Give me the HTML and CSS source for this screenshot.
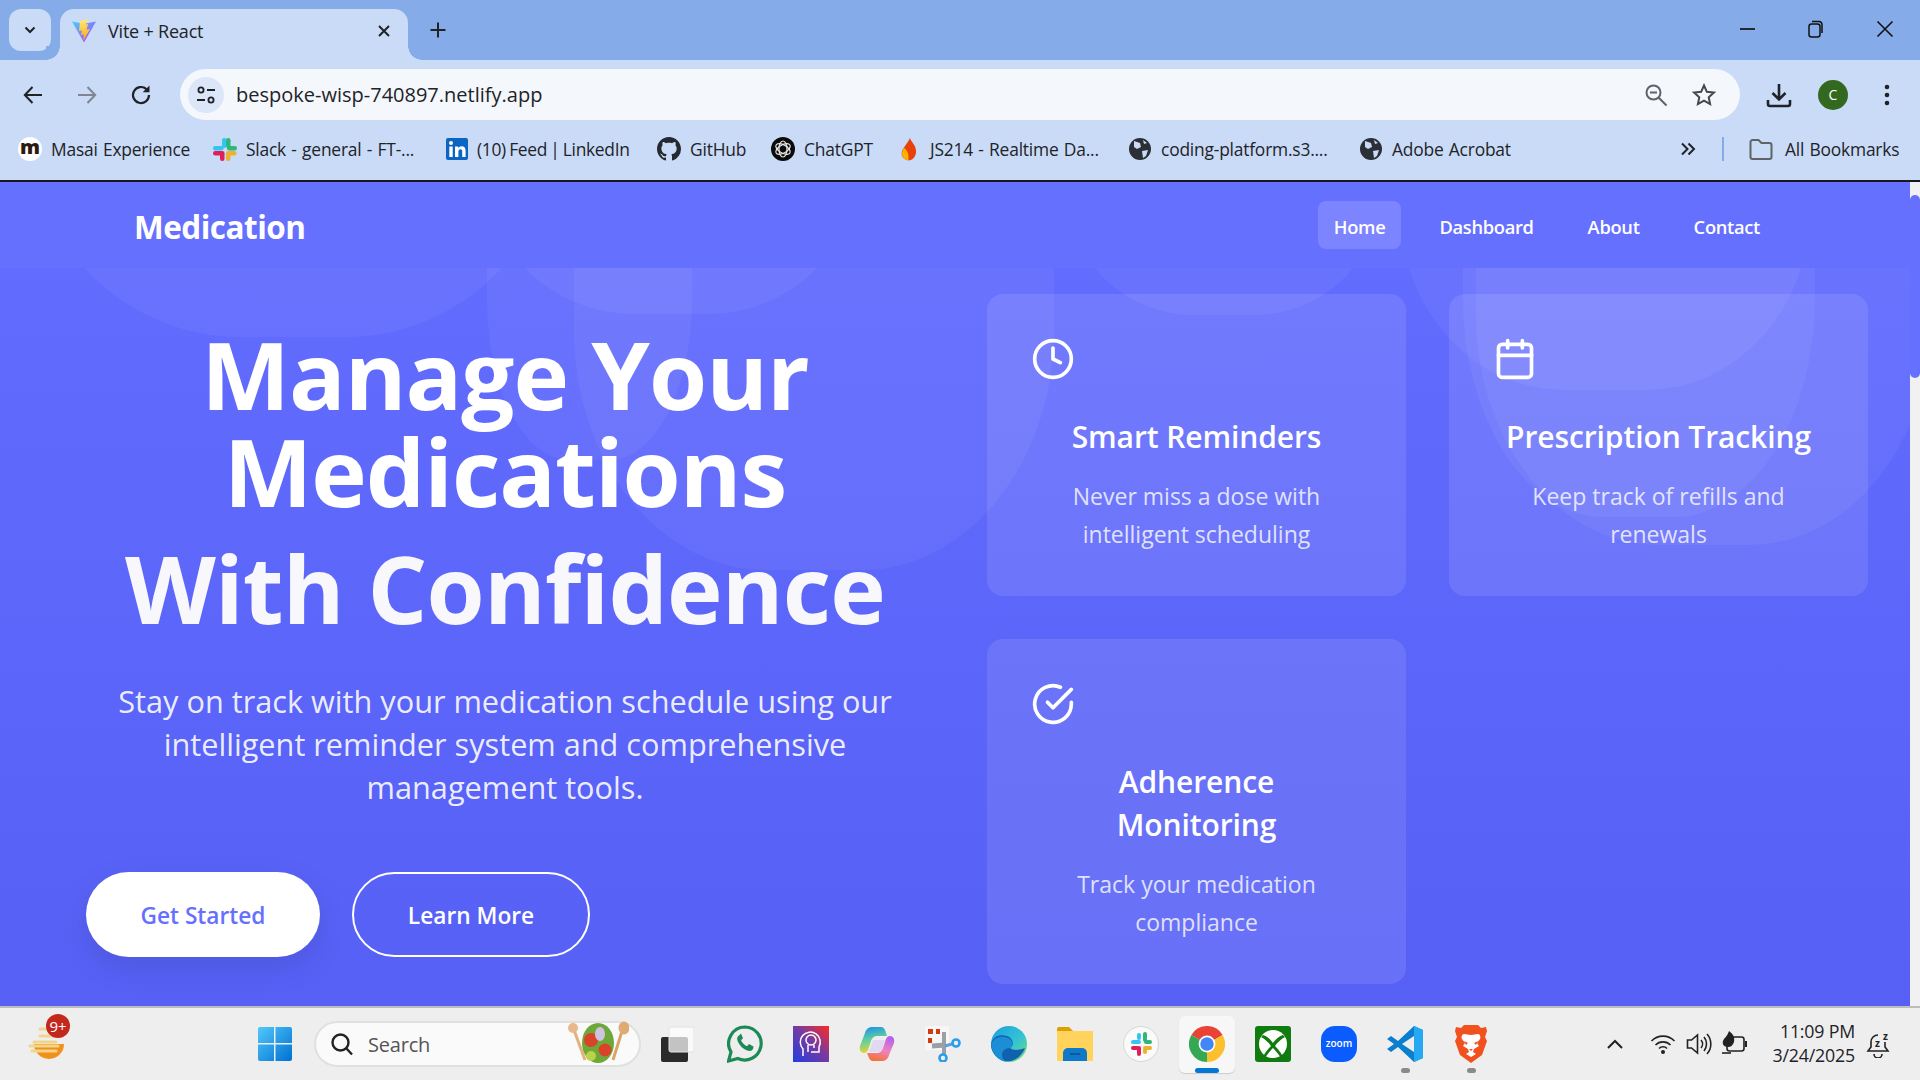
FILE: index.html
```html
<!DOCTYPE html>
<html lang="en">
<head>
    <meta charset="UTF-8">
    <meta name="viewport" content="width=device-width, initial-scale=1.0">
    <title>Vite + React</title>
    <link rel="stylesheet" href="styles.css">
</head>
<body>
    <div class="tabstrip">
        <div class="tab-list"><svg width="16" height="16" viewBox="0 0 16 16"><path d="M3.5 5.5 8 10l4.500-4.500" fill="none" stroke="#1f2328" stroke-width="2"/></svg></div>
        <div class="tab">
            <svg class="favicon" width="24" height="24" viewBox="0 0 24 24">
                <defs>
                    <linearGradient id="viteA" x1="0" y1="0" x2="1" y2="1"><stop offset="0" stop-color="#41d1ff"/><stop offset="1" stop-color="#bd34fe"/></linearGradient>
                    <linearGradient id="viteB" x1="0" y1="0" x2="0" y2="1"><stop offset="0" stop-color="#ffea83"/><stop offset="1" stop-color="#ffa800"/></linearGradient>
                </defs>
                <path d="M0 2.500 12 23.500 24 2.500 12 4.800z" fill="url(#viteA)"/>
                <path d="M17 0 8 2 7 12l3-.5-1 4.500 3-.5-1 6.500 7-12-3.500.7L16 5l-2.500.5z" fill="url(#viteB)"/>
            </svg>
            <span class="tab-title">Vite + React</span>
            <svg class="tab-close" width="14" height="14" viewBox="0 0 14 14"><path d="M2 2l10 10M12 2 2 12" stroke="#1f2328" stroke-width="2"/></svg>
        </div>
        <svg class="new-tab" width="18" height="18" viewBox="0 0 18 18"><path d="M9 1.500v15M1.500 9h15" stroke="#1f2328" stroke-width="2"/></svg>
        <div class="win-controls">
            <svg width="16" height="16" viewBox="0 0 16 16"><path d="M0 8h15" stroke="#111" stroke-width="1.700"/></svg>
            <svg width="16" height="18" viewBox="0 0 16 18"><rect x="1" y="4" width="11" height="13" rx="2.500" fill="none" stroke="#111" stroke-width="1.500"/><path d="M4 1.500h7a3 3 0 0 1 3 3V13" fill="none" stroke="#111" stroke-width="1.500"/></svg>
            <svg width="18" height="18" viewBox="0 0 18 18"><path d="M1.500 1.500l15 15M16.500 1.500l-15 15" stroke="#111" stroke-width="1.600"/></svg>
        </div>
    </div>

    <div class="toolbar">
        <svg class="nav-btn" width="24" height="24" viewBox="0 0 24 24"><path d="M21 12H4M11.500 4 3.800 12l7.700 8" fill="none" stroke="#1f2328" stroke-width="2"/></svg>
        <svg class="nav-btn" width="24" height="24" viewBox="0 0 24 24"><path d="M3 12h17M12.500 4l7.700 8-7.700 8" fill="none" stroke="#80858f" stroke-width="2"/></svg>
        <svg class="nav-btn" width="24" height="24" viewBox="0 0 24 24"><path d="M20 12a8 8 0 1 1-2.600-5.900" fill="none" stroke="#1f2328" stroke-width="2.200"/><path d="M20.500 2.500v6.800h-6.800z" fill="#1f2328"/></svg>
        <div class="omnibox">
            <span class="site-info"><svg width="22" height="22" viewBox="0 0 22 22"><circle cx="6" cy="6" r="2.600" fill="none" stroke="#1f2328" stroke-width="1.800"/><path d="M12 6h8M2 16h8" stroke="#1f2328" stroke-width="1.800"/><circle cx="16" cy="16" r="2.600" fill="none" stroke="#1f2328" stroke-width="1.800"/></svg></span>
            <span class="url">bespoke-wisp-740897.netlify.app</span>
            <svg class="omni-zoom" width="24" height="24" viewBox="0 0 24 24"><circle cx="9.500" cy="9.500" r="7" fill="none" stroke="#5f6368" stroke-width="2"/><path d="M6 9.500h7M14.500 14.500l8 8" stroke="#5f6368" stroke-width="2"/></svg>
            <svg class="omni-star" width="24" height="24" viewBox="0 0 24 24"><path d="M12 2.500l2.900 6.300 6.900.8-5.100 4.700 1.400 6.800-6.100-3.400-6.100 3.400 1.400-6.800-5.100-4.700 6.900-.8z" fill="none" stroke="#45484d" stroke-width="2"/></svg>
        </div>
        <svg class="tool-download" width="26" height="26" viewBox="0 0 26 26"><path d="M13 2v15M6.500 11l6.500 6.500 6.500-6.500" fill="none" stroke="#1f2328" stroke-width="2.600"/><path d="M2 18v4a2 2 0 0 0 2 2h18a2 2 0 0 0 2-2v-4" fill="none" stroke="#1f2328" stroke-width="2.600"/></svg>
        <span class="avatar">C</span>
        <svg class="tool-menu" width="6" height="24" viewBox="0 0 6 24"><circle cx="3" cy="4" r="2.300" fill="#1f2328"/><circle cx="3" cy="12" r="2.300" fill="#1f2328"/><circle cx="3" cy="20" r="2.300" fill="#1f2328"/></svg>
    </div>

    <div class="bookmarks">
        <div class="bm"><span class="bm-m">m</span>Masai Experience</div>
        <div class="bm"><svg width="24" height="24" viewBox="0 0 24 24"><rect x="9" y="1" width="4.500" height="10" rx="2.200" fill="#36c5f0"/><rect x="0" y="9" width="10.500" height="4.500" rx="2.200" fill="#36c5f0"/><rect x="13" y="1" width="4.500" height="10" rx="2.200" fill="#2eb67d"/><rect x="14" y="9" width="10" height="4.500" rx="2.200" fill="#2eb67d"/><rect x="0" y="14" width="10" height="4.500" rx="2.200" fill="#e01e5a"/><rect x="7" y="14" width="4.500" height="10" rx="2.200" fill="#e01e5a"/><rect x="13" y="14" width="10.500" height="4.500" rx="2.200" fill="#ecb22e"/><rect x="13" y="16" width="4.500" height="8" rx="2.200" fill="#ecb22e"/></svg>Slack - general - FT-...</div>
        <div class="bm bm-feed"><svg width="22" height="24" viewBox="0 0 22 24"><rect x="0" y="1" width="22" height="22" rx="2" fill="#0a66c2"/><circle cx="5" cy="6" r="2" fill="#fff"/><path d="M3.300 9.500h3.400V20H3.300zM9 9.500h3.200V11c.8-1.100 2-1.800 3.500-1.800 2.800 0 3.900 1.800 3.900 4.700V20h-3.400v-5.500c0-1.500-.5-2.300-1.700-2.300-1.300 0-2.100.9-2.100 2.500V20H9z" fill="#fff"/></svg>(10) Feed | LinkedIn</div>
        <div class="bm"><svg width="24" height="24" viewBox="0 0 16 16"><path fill="#24292f" d="M8 0C3.580 0 0 3.580 0 8c0 3.540 2.290 6.530 5.470 7.590.4.070.55-.17.55-.38 0-.19-.01-.82-.01-1.490-2.010.37-2.530-.49-2.690-.94-.09-.23-.48-.94-.82-1.130-.28-.15-.68-.52-.01-.53.63-.01 1.080.58 1.230.82.720 1.210 1.870.87 2.330.66.070-.52.28-.87.510-1.070-1.780-.2-3.640-.89-3.640-3.950 0-.87.310-1.590.820-2.150-.08-.2-.36-1.020.08-2.120 0 0 .67-.21 2.200.82.640-.18 1.320-.27 2-.27s1.360.09 2 .27c1.530-1.040 2.200-.82 2.200-.82.440 1.100.16 1.920.08 2.120.51.560.82 1.270.82 2.150 0 3.070-1.870 3.750-3.650 3.950.29.250.54.730.54 1.480 0 1.070-.01 1.930-.01 2.200 0 .21.150.46.550.38A8.010 8.010 0 0 0 16 8c0-4.420-3.580-8-8-8z"/></svg>GitHub</div>
        <div class="bm"><svg width="24" height="24" viewBox="0 0 24 24"><circle cx="12" cy="12" r="12" fill="#0b0b0b"/><g fill="none" stroke="#e8e8e8" stroke-width="1.200"><ellipse cx="12" cy="12" rx="8" ry="4" transform="rotate(30 12 12)"/><ellipse cx="12" cy="12" rx="8" ry="4" transform="rotate(90 12 12)"/><ellipse cx="12" cy="12" rx="8" ry="4" transform="rotate(150 12 12)"/></g></svg>ChatGPT</div>
        <div class="bm"><svg width="24" height="24" viewBox="0 0 24 24"><path d="M13 1c1 4 6 7 6 13a7.500 8.500 0 0 1-14 5C3 13 10 8 13 1z" fill="#e8410a"/><path d="M7 11c3 2 5 5 4.500 12A6 6 0 0 1 5 17c0-2 1-4 2-6z" fill="#ffb300"/></svg>JS214 - Realtime Da...</div>
        <div class="bm"><svg width="24" height="24" viewBox="0 0 24 24"><circle cx="12" cy="12" r="11" fill="#2b2f36"/><path d="M6 4l6 2 1 4-4 2-3-2zM14 14l6-1-2 6-3 2zM15 3l4 3-3 1z" fill="#c9dbf6"/></svg>coding-platform.s3....</div>
        <div class="bm"><svg width="24" height="24" viewBox="0 0 24 24"><circle cx="12" cy="12" r="11" fill="#2b2f36"/><path d="M6 4l6 2 1 4-4 2-3-2zM14 14l6-1-2 6-3 2zM15 3l4 3-3 1z" fill="#c9dbf6"/></svg>Adobe Acrobat</div>
        <svg class="bm-more" width="16" height="16" viewBox="0 0 16 16"><path d="M2 2.500 7.500 8 2 13.500M8.500 2.500 14 8l-5.500 5.500" fill="none" stroke="#1f2328" stroke-width="2"/></svg>
        <span class="bm-sep"></span>
        <div class="bm"><svg width="24" height="24" viewBox="0 0 24 24"><path d="M1.500 5a2 2 0 0 1 2-2h6l3 3h8a2 2 0 0 1 2 2v12a2 2 0 0 1-2 2h-17a2 2 0 0 1-2-2z" fill="none" stroke="#5f6368" stroke-width="2"/></svg>All Bookmarks</div>
    </div>

    <div class="page">
        <div class="content">
            <nav class="site-nav">
                <a class="logo">Medication</a>
                <ul class="nav-links">
                    <li class="active">Home</li>
                    <li>Dashboard</li>
                    <li>About</li>
                    <li>Contact</li>
                </ul>
            </nav>
            <main class="hero">
                <span class="blob blob-a"></span>
                <span class="blob blob-b"></span>
                <span class="blob blob-c"></span>
                <span class="blob blob-d"></span>
                <span class="blob blob-e"></span>
                <span class="blob blob-f"></span>
                <span class="blob blob-g"></span>
                <span class="blob blob-h"></span>

                <section class="hero-text">
                    <h1>Manage Your<br>Medications <span class="gradient-text">With Confidence</span></h1>
                    <p class="subtitle">Stay on track with your medication schedule using our<br>intelligent reminder system and comprehensive<br>management tools.</p>
                    <div class="hero-buttons">
                        <button class="btn btn-primary">Get Started</button>
                        <button class="btn btn-outline">Learn More</button>
                    </div>
                </section>

                <section class="features">
                    <div class="card">
                        <svg class="card-icon" viewBox="0 0 24 24"><circle cx="12" cy="12" r="10"/><polyline points="12 6 12 12 16 14"/></svg>
                        <h3>Smart Reminders</h3>
                        <p>Never miss a dose with intelligent scheduling</p>
                    </div>
                    <div class="card">
                        <svg class="card-icon" viewBox="0 0 24 24"><rect x="3" y="4" width="18" height="18" rx="2"/><line x1="16" y1="2" x2="16" y2="6"/><line x1="8" y1="2" x2="8" y2="6"/><line x1="3" y1="10" x2="21" y2="10"/></svg>
                        <h3>Prescription Tracking</h3>
                        <p>Keep track of refills and renewals</p>
                    </div>
                    <div class="card">
                        <svg class="card-icon" viewBox="0 0 24 24"><path d="M22 11.080V12a10 10 0 1 1-5.930-9.140"/><polyline points="22 4 12 14.010 9 11.010"/></svg>
                        <h3>Adherence<br>Monitoring</h3>
                        <p>Track your medication compliance</p>
                    </div>
                </section>
            </main>
        </div>
        <div class="scrollbar"><span class="thumb"></span></div>
    </div>

    <footer class="taskbar">
        <div class="weather">
            <svg width="40" height="40" viewBox="0 0 40 40"><path d="M6 22h30a15 15 0 0 1-30 0z" fill="#f39019"/><path d="M12 7h6M12 14h20M6 20h22M2 24h28M4 29h24" stroke="#f2d58c" stroke-width="3" stroke-linecap="round"/></svg>
            <span class="badge">9+</span>
        </div>
        <div class="task-apps">
            <span class="task-slot"><svg width="36" height="36" viewBox="0 0 36 36"><defs><linearGradient id="win" x1="0" y1="0" x2="1" y2="1"><stop offset="0" stop-color="#52c8fb"/><stop offset="1" stop-color="#0070d2"/></linearGradient></defs><path d="M1 3a2 2 0 0 1 2-2h14v16H1zM18.500 1H33a2 2 0 0 1 2 2v14H18.500zM1 18.500h16V35H3a2 2 0 0 1-2-2zM18.500 18.500H35V33a2 2 0 0 1-2 2H18.500z" fill="url(#win)"/></svg></span>
            <div class="search-box">
                <svg width="24" height="24" viewBox="0 0 24 24"><circle cx="10.500" cy="10.500" r="8" fill="none" stroke="#222" stroke-width="2.400"/><path d="M16 16l6 6.500" stroke="#222" stroke-width="2.400"/></svg>
                <span class="search-text">Search</span>
                <svg class="search-art" width="62" height="46" viewBox="0 0 62 46"><path d="M7 10l11 30" stroke="#e2b27a" stroke-width="3"/><circle cx="6" cy="8" r="5" fill="#e8b98a"/><path d="M56 8 46 40" stroke="#d9a468" stroke-width="3"/><ellipse cx="57" cy="8" rx="5.500" ry="6.500" fill="#e0ab73"/><ellipse cx="31" cy="23" rx="16" ry="20" fill="#6fa838"/><circle cx="24" cy="20" r="7" fill="#d8432a"/><circle cx="38" cy="30" r="6.500" fill="#d8432a"/><ellipse cx="33" cy="14" rx="5" ry="7" fill="#cfc4e0"/><circle cx="24" cy="36" r="5" fill="#b8d24a"/></svg>
            </div>
            <span class="task-slot first-app"><svg width="36" height="36" viewBox="0 0 36 36"><rect x="3" y="11" width="27" height="25" rx="2" fill="#2a2a2a"/><rect x="11" y="1" width="25" height="25" rx="2" fill="#fff" fill-opacity=".72" stroke="#e2e2e2"/></svg></span>
            <span class="task-slot"><svg width="36" height="38" viewBox="0 0 36 38"><path d="M18 2a16.500 16.500 0 0 0-14 25L1.500 36l9.300-2.500A16.500 16.500 0 1 0 18 2z" fill="none" stroke="#1c8a57" stroke-width="3.200"/><path d="M12 10.500c-2 1-2.500 3.500-1 6.500 2 4 5 7 9 8.500 3 1 5 .5 6-1.500l.5-2.500-4.500-2.500-2 2.200c-2.500-1-5-3.500-6-6l2-2-2-4.700z" fill="#1c8a57"/></svg></span>
            <span class="task-slot"><svg width="36" height="36" viewBox="0 0 36 36"><defs><linearGradient id="gm" x1="0" y1="1" x2="1" y2="0"><stop offset="0" stop-color="#1f3fe0"/><stop offset=".55" stop-color="#7a3aa0"/><stop offset="1" stop-color="#ff2a20"/></linearGradient></defs><rect width="36" height="36" fill="url(#gm)"/><g fill="none" stroke="#fff" stroke-width="1.500"><path d="M10 30v-7a10 10 0 1 1 16-2v5h-8"/><circle cx="18" cy="14" r="5"/><path d="M15 19v7M21 19v3"/></g></svg></span>
            <span class="task-slot"><svg width="36" height="36" viewBox="0 0 36 36"><defs><linearGradient id="co1" x1=".2" y1="0" x2=".4" y2="1"><stop offset="0" stop-color="#1f8fe8"/><stop offset=".5" stop-color="#5fd0a0"/><stop offset="1" stop-color="#f2d22e"/></linearGradient><linearGradient id="co2" x1=".7" y1="0" x2=".4" y2="1"><stop offset="0" stop-color="#b060f0"/><stop offset=".55" stop-color="#f080c0"/><stop offset="1" stop-color="#f4733a"/></linearGradient></defs><path d="M13 1h9c2 0 3 1 4 3l2 6H18c-3 0-5 2-6 5l-3 9c-1 2-2 3-4 3-3 0-5-3-4-7L6 7c1-4 4-6 7-6z" fill="url(#co1)"/><path d="M23 35h-9c-2 0-3-1-4-3l-2-5h10c3 0 5-2 6-5l3-9c1-2 2-3 4-3 3 0 5 3 4 7l-5 12c-1 4-4 6-7 6z" fill="url(#co2)"/><path d="M14 14h12l-4 12H10z" fill="#d6c8f0" fill-opacity=".55"/></svg></span>
            <span class="task-slot"><svg width="36" height="36" viewBox="0 0 36 36"><rect width="24" height="24" fill="#f6f6f6"/><path d="M3 3h5v5H3zM11 3h4v5h-4zM3 12h4v5H3z" fill="#d4380d"/><path d="M7 20 20 19" stroke="#9aa0a6" stroke-width="5"/><path d="M19 6v22" stroke="#9aa0a6" stroke-width="4"/><path d="M20 20l7-2" stroke="#5f9fd8" stroke-width="3"/><circle cx="31" cy="17" r="3.500" fill="none" stroke="#2a9fe8" stroke-width="2.600"/><circle cx="18" cy="32" r="3.500" fill="none" stroke="#2a9fe8" stroke-width="2.600"/></svg></span>
            <span class="task-slot"><svg width="36" height="36" viewBox="0 0 36 36"><defs><linearGradient id="ed" x1="0" y1="0" x2="1" y2="1"><stop offset="0" stop-color="#1b9de2"/><stop offset=".6" stop-color="#37c6d0"/><stop offset="1" stop-color="#7ddb5c"/></linearGradient></defs><circle cx="18" cy="18" r="18" fill="url(#ed)"/><path d="M0 18C2 9 10 8 16 10c6 2 8 9 3 12 3 3 10 2 15 0-4 10-14 16-23 12C4 31 0 25 0 18z" fill="#1161b0"/><path d="M19 22c-5 0-8 3-8 7 0 3 2 6 5 7-8-1-15-8-16-18 3-7 11-9 17-6 5 2 6 7 2 10z" fill="#1b8ed6"/></svg></span>
            <span class="task-slot"><svg width="36" height="34" viewBox="0 0 36 34"><path d="M0 2a2 2 0 0 1 2-2h10l4 4h-16z" fill="#dca000"/><path d="M0 4h36v29a1 1 0 0 1-1 1H1a1 1 0 0 1-1-1z" fill="#ffd35c"/><path d="M6 34v-8a5 5 0 0 1 5-5h14a5 5 0 0 1 5 5v8z" fill="#0f78c8"/><path d="M13 27h10" stroke="#0a5a99" stroke-width="2"/></svg></span>
            <span class="task-slot"><svg width="36" height="36" viewBox="0 0 36 36"><circle cx="18" cy="18" r="17.500" fill="#fafafa" stroke="#d6d6d6"/><rect x="20" y="6" width="4" height="10" rx="2" fill="#2eb67d"/><rect x="8" y="14" width="10" height="4" rx="2" fill="#36c5f0"/><rect x="14" y="7" width="4" height="7" rx="2" fill="#36c5f0"/><rect x="21" y="14" width="8" height="4" rx="2" fill="#2eb67d"/><rect x="8" y="20" width="8" height="4" rx="2" fill="#e01e5a"/><rect x="14" y="20" width="4" height="10" rx="2" fill="#e01e5a"/><rect x="20" y="20" width="9" height="4" rx="2" fill="#ecb22e"/><rect x="20" y="22" width="4" height="6" rx="2" fill="#ecb22e"/></svg></span>
            <span class="task-slot is-active"><svg width="36" height="36" viewBox="0 0 24 24"><path d="M12 12 1.600 6A12 12 0 0 1 22.400 6z" fill="#ea4335"/><path d="M12 12 22.400 6A12 12 0 0 1 12 24z" fill="#fbc02d"/><path d="M12 12V24A12 12 0 0 1 1.600 6z" fill="#34a853"/><circle cx="12" cy="12" r="5.600" fill="#fff"/><circle cx="12" cy="12" r="4.500" fill="#4285f4"/></svg></span>
            <span class="task-slot"><svg width="36" height="36" viewBox="0 0 36 36"><rect width="36" height="36" rx="3" fill="#107c10"/><circle cx="18" cy="18" r="14" fill="#fff"/><path d="M8 9c4 1 8 5 10 8 2-3 6-7 10-8l2 2c-4 2-8 6-10 9 3 3 7 8 8 11l-2 1c-2-3-5-7-8-10-3 3-6 7-8 10l-2-1c1-3 5-8 8-11C14 17 10 13 6 11z" fill="#107c10"/></svg></span>
            <span class="task-slot"><svg width="36" height="36" viewBox="0 0 36 36"><rect width="36" height="36" rx="14" fill="#0b5cff"/><text x="18" y="21" text-anchor="middle" class="zoom-word">zoom</text></svg></span>
            <span class="task-slot has-dot"><svg width="36" height="36" viewBox="0 0 36 36"><path d="M27 0 36 4v28l-9 4-16-15-7 5-4-3 7-5-7-5 4-3 7 5z" fill="#0a7fd0"/><path d="M27 0 36 4v28l-9 4z" fill="#26a9f2"/><path d="M27 10 15 18l12 8z" fill="#eeeeee"/></svg></span>
            <span class="task-slot has-dot"><svg width="32" height="38" viewBox="0 0 32 38"><path d="M9 0h14l3 3 5-1 1 4-2 6 2 4-5 14-11 8-11-8L0 16l2-4-2-6 1-4 5 1z" fill="#f1501f"/><path d="M16 10c-3 0-4-1-7-1-2 0-3 3-2 5l3 4-2 3 5 3 1 3-3 2 5 3 5-3-3-2 1-3 5-3-2-3 3-4c1-2 0-5-2-5-3 0-4 1-7 1z" fill="#fff"/><path d="M9 16l4 2-2 2zM23 16l-4 2 2 2zM14 24h4l-2 2z" fill="#f1501f"/></svg></span>
        </div>
        <div class="tray">
            <svg class="tray-chevron" width="18" height="12" viewBox="0 0 18 12"><path d="M2 10l7-7 7 7" fill="none" stroke="#222" stroke-width="2"/></svg>
            <svg class="tray-wifi" width="26" height="22" viewBox="0 0 26 22"><g fill="none" stroke="#222" stroke-width="1.600"><path d="M1.500 8a16 16 0 0 1 23 0"/><path d="M5.500 12a10.500 10.500 0 0 1 15 0"/><path d="M9 15.500a5.500 5.500 0 0 1 8 0"/></g><circle cx="13" cy="19" r="2" fill="#222"/></svg>
            <svg class="tray-sound" width="26" height="24" viewBox="0 0 26 24"><g fill="none" stroke="#222" stroke-width="1.600"><path d="M1.500 8v8h4l6 5V3l-6 5z"/><path d="M15 8a6 6 0 0 1 0 8M18 5a11 11 0 0 1 0 14M21 2a15 15 0 0 1 0 20"/></g></svg>
            <svg class="tray-battery" width="28" height="26" viewBox="0 0 28 26"><rect x="6" y="7" width="17" height="14" rx="2.500" fill="none" stroke="#222" stroke-width="1.600"/><path d="M25 11v6" stroke="#222" stroke-width="2"/><path d="M8 1c4 3 6 6 5 11-1 3-3 5-6 5-4 0-6-3-5-6s4-4 6-10z" fill="#222"/><path d="M1 23h9" stroke="#222" stroke-width="1.600"/></svg>
            <div class="clock"><span>11:09 PM</span><span>3/24/2025</span></div>
            <svg class="tray-bell" width="30" height="28" viewBox="0 0 30 28"><path d="M12 5a7 7 0 0 0-7 7v5l-3 4h20l-3-4v-5M8 24a4 4 0 0 0 8 0" fill="none" stroke="#222" stroke-width="1.600"/><text x="9" y="17" class="bell-z">z</text><text x="17" y="10" class="bell-z">z</text></svg>
        </div>
    </footer>
</body>
</html>
```

FILE: styles.css
```css
* {
    box-sizing: border-box;
}
html, body {
    margin: 0;
    height: 100%;
    overflow: hidden;
}
body {
    width: 1920px;
    height: 1080px;
    font-family: "Open Sans", "Noto Sans", sans-serif;
    color: #1f2328;
    background: #c9dbf6;
    display: flex;
    flex-direction: column;
}
svg {
    display: block;
    flex: none;
}

/* browser window */
.tabstrip {
    height: 60px;
    background: #85abe9;
    display: flex;
    align-items: flex-start;
    flex: none;
}
.tab-list {
    width: 42px;
    height: 42px;
    margin: 9px 0 0 9px;
    background: #c9dbf6;
    border-radius: 12px;
    display: flex;
    align-items: center;
    justify-content: center;
}
.tab {
    width: 348px;
    height: 51px;
    margin: 9px 0 0 9px;
    background: #c9dbf6;
    border-radius: 14px 14px 0 0;
    display: flex;
    align-items: center;
    padding: 0 17px 8px 12px;
    position: relative;
}
.tab::before,
.tab::after {
    content: "";
    position: absolute;
    bottom: 0;
    width: 14px;
    height: 14px;
    background: radial-gradient(circle at 0 0, #85abe9 13.500px, #c9dbf6 14px);
}
.tab::before {
    left: -14px;
}
.tab::after {
    right: -14px;
    background: radial-gradient(circle at 100% 0, #85abe9 13.500px, #c9dbf6 14px);
}
.tab-title {
    margin: 1px 0 0 12px;
    font-size: 18px;
    letter-spacing: -0.2px;
    flex: 1;
}
.new-tab {
    margin: 21px 0 0 21px;
}
.win-controls {
    margin-left: auto;
    width: 180px;
    height: 60px;
    padding-right: 26px;
    display: flex;
    align-items: center;
    justify-content: space-between;
    padding-bottom: 3px;
}
.toolbar {
    height: 60px;
    flex: none;
    display: flex;
    align-items: center;
    padding: 9px 0 0 21px;
    position: relative;
}
.nav-btn {
    margin-right: 30px;
}
.omnibox {
    width: 1560px;
    height: 51px;
    margin-left: -3px;
    border-radius: 26px;
    background: #f4f7fc;
    display: flex;
    align-items: center;
    padding: 0 24px 0 8px;
}
.site-info {
    width: 36px;
    height: 36px;
    border-radius: 50%;
    background: #dbe6f8;
    display: flex;
    align-items: center;
    justify-content: center;
}
.url {
    margin: -1px 0 0 12px;
    font-size: 20px;
    flex: 1;
}
.omni-star {
    margin-left: 24px;
}
.tool-download {
    margin-left: 26px;
}
.avatar {
    width: 30px;
    height: 30px;
    margin-left: 26px;
    border-radius: 50%;
    background: #33691e;
    color: #fff;
    font-size: 14px;
    display: flex;
    align-items: center;
    justify-content: center;
}
.tool-menu {
    margin-left: 36px;
}
.bookmarks {
    height: 60px;
    flex: none;
    display: grid;
    grid-template-columns: 195px 233px 211px 114px 126px 231px 231px 320px 0 auto;
    align-items: center;
    padding: 0 0 2px 18px;
    font-size: 17.400px;
    letter-spacing: -0.2px;
    word-spacing: 1px;
    position: relative;
}
.bm {
    display: flex;
    align-items: center;
    gap: 9px;
    white-space: nowrap;
}
.bm-feed {
    letter-spacing: -0.3px;
    word-spacing: -1px;
}
.bm-m {
    width: 24px;
    height: 24px;
    border-radius: 50%;
    background: #fff;
    color: #2a1a12;
    font-weight: 800;
    font-size: 20px;
    line-height: 20px;
    text-align: center;
}
.bm-more {
    position: absolute;
    left: 1680px;
    top: 21px;
}
.bm-sep {
    position: absolute;
    left: 1722px;
    top: 17px;
    width: 2px;
    height: 24px;
    background: #85abe9;
}
.bm:last-child {
    position: absolute;
    left: 1749px;
    top: 17px;
    gap: 12px;
}

/* the web page */
.page {
    height: 828px;
    flex: none;
    display: flex;
    border-top: 2px solid #16181d;
    border-bottom: 2px solid #bdbdbd;
}
.content {
    width: 1910px;
    background: linear-gradient(180deg, #636dff 0%, #5660f5 100%);
    display: flex;
    flex-direction: column;
}
.scrollbar {
    width: 10px;
    background: #f1f1f1;
    padding-top: 13px;
}
.thumb {
    display: block;
    height: 183px;
    background: #6670ff;
    border-radius: 5px;
}
.site-nav {
    height: 86px;
    flex: none;
    background: #6670ff;
    display: flex;
    align-items: center;
    justify-content: space-between;
    padding: 0 134px;
    color: #fff;
    position: relative;
    z-index: 1;
}
.logo {
    margin-top: 3px;
    font-size: 31.500px;
    font-weight: 700;
    letter-spacing: -0.5px;
}
.nav-links {
    list-style: none;
    display: flex;
    gap: 22px;
    margin: 0;
    padding: 0;
    font-size: 18.300px;
    font-weight: 600;
    letter-spacing: -0.3px;
}
.nav-links li {
    height: 48px;
    padding: 2px 16px 0;
    border-radius: 8px;
    display: flex;
    align-items: center;
}
.nav-links .active {
    background: rgba(255, 255, 255, 0.15);
}
.hero {
    flex: 1;
    min-height: 0;
    position: relative;
    overflow: hidden;
    display: grid;
    grid-template-columns: 838px 880px;
    gap: 63px;
    padding: 26px 0 0 86px;
    color: #fff;
}
.hero-text,
.features {
    position: relative;
}

/* background shapes, the top of each runs up under the nav */
.blob {
    position: absolute;
    background: rgba(255, 255, 255, 0.05);
    border-radius: 40%;
}
.blob-a {
    left: 30px;
    top: -457px;
    width: 526px;
    height: 526px;
}
.blob-b {
    left: 487px;
    top: -210px;
    width: 205px;
    height: 402px;
}
.blob-c {
    left: 574px;
    top: -298px;
    width: 480px;
    height: 600px;
}
.blob-d {
    left: 483px;
    top: -330px;
    width: 376px;
    height: 376px;
}
.blob-e {
    left: 1065px;
    top: -280px;
    width: 318px;
    height: 327px;
}
.blob-f {
    left: 1400px;
    top: -330px;
    width: 410px;
    height: 452px;
}
.blob-g {
    left: 1463px;
    top: -300px;
    width: 352px;
    height: 549px;
}
.blob-h {
    left: 1476px;
    top: -300px;
    width: 456px;
    height: 577px;
}
h1 {
    margin: 32px 0 0;
    font-size: 94px;
    line-height: 97px;
    letter-spacing: -1px;
    font-weight: 700;
    text-align: center;
}
.gradient-text {
    display: block;
    margin-top: 20px;
    line-height: 97px;
    letter-spacing: -0.8px;
    color: #f8f8fc;
}
.subtitle {
    margin: 43px 0 0;
    font-size: 30.700px;
    line-height: 43px;
    text-align: center;
    color: rgba(255, 255, 255, 0.9);
}
.hero-buttons {
    display: flex;
    gap: 32px;
    margin-top: 63px;
}
.btn {
    height: 85px;
    padding-top: 3px;
    border-radius: 43px;
    font-family: inherit;
    font-size: 22.700px;
    font-weight: 600;
}
.btn-primary {
    width: 234px;
    border: none;
    background: #fff;
    color: #6670ff;
    box-shadow: 0 10px 30px rgba(0, 0, 0, 0.1);
}
.btn-outline {
    width: 238px;
    border: 2px solid #fff;
    background: transparent;
    color: #fff;
}
.features {
    display: grid;
    grid-template-columns: 419px 419px;
    gap: 43px;
    align-content: start;
}
.card {
    padding: 43px 44px;
    background: rgba(255, 255, 255, 0.1);
    border-radius: 16px;
    text-align: center;
}
.card-icon {
    width: 44px;
    height: 44px;
    fill: none;
    stroke: #fff;
    stroke-width: 2;
    stroke-linecap: round;
    stroke-linejoin: round;
    margin-bottom: 34px;
}
.card h3 {
    margin: 0 0 19px;
    font-size: 30px;
    line-height: 43px;
    letter-spacing: -0.1px;
    font-weight: 600;
}
.card p {
    margin: 0;
    font-size: 23px;
    line-height: 38px;
    color: rgba(255, 255, 255, 0.8);
}

/* windows taskbar */
.taskbar {
    flex: 1;
    background: #eeeeee;
    display: flex;
    align-items: center;
    position: relative;
}
.weather {
    position: absolute;
    left: 28px;
    top: 14px;
}
.badge {
    position: absolute;
    left: 18px;
    top: -8px;
    width: 24px;
    height: 24px;
    border-radius: 50%;
    background: #c4281c;
    color: #fff;
    font-size: 15px;
    line-height: 24px;
    text-align: center;
}
.task-apps {
    display: flex;
    align-items: center;
    padding-left: 242px;
}
.task-slot {
    width: 66px;
    height: 70px;
    display: flex;
    align-items: center;
    justify-content: center;
    position: relative;
}
.search-box {
    width: 327px;
    height: 46px;
    margin-left: 6px;
    border: 2px solid #e0e0e0;
    border-radius: 23px;
    background: #fafafa;
    display: flex;
    align-items: center;
    padding-left: 14px;
    position: relative;
}
.search-text {
    margin-left: 14px;
    font-size: 20px;
    letter-spacing: -0.2px;
    color: #555;
}
.search-art {
    position: absolute;
    right: 10px;
    top: -3px;
}
.first-app {
    margin: 0 3px 0 2px;
}
.is-active::before {
    content: "";
    position: absolute;
    left: 5px;
    right: 5px;
    top: 7px;
    bottom: 6px;
    background: #f7f7f7;
    border-radius: 6px;
    box-shadow: 0 1px 1px #ccc;
}
.is-active svg {
    position: relative;
}
.is-active::after {
    content: "";
    position: absolute;
    left: 21px;
    bottom: 6px;
    width: 24px;
    height: 5px;
    border-radius: 3px;
    background: #0078d4;
}
.has-dot::after {
    content: "";
    position: absolute;
    left: 29px;
    bottom: 6px;
    width: 9px;
    height: 5px;
    border-radius: 3px;
    background: #8a8a8a;
}
.zoom-word {
    font-family: "Open Sans", sans-serif;
    font-size: 10px;
    font-weight: 600;
    fill: #fff;
}
.tray {
    position: absolute;
    left: 0;
    top: 0;
    width: 100%;
    height: 100%;
    pointer-events: none;
}
.tray svg,
.clock {
    position: absolute;
}
.tray-chevron {
    left: 1606px;
    top: 30px;
}
.tray-wifi {
    left: 1650px;
    top: 25px;
}
.tray-sound {
    left: 1686px;
    top: 24px;
}
.tray-battery {
    left: 1721px;
    top: 22px;
}
.tray-bell {
    left: 1866px;
    top: 22px;
}
.bell-z {
    font-family: "Open Sans", sans-serif;
    font-size: 10px;
    font-weight: 700;
    fill: #222;
}
.clock {
    right: 65px;
    top: 11px;
    display: flex;
    flex-direction: column;
    align-items: flex-end;
    font-size: 17.800px;
    line-height: 24px;
    letter-spacing: -0.2px;
}
```
